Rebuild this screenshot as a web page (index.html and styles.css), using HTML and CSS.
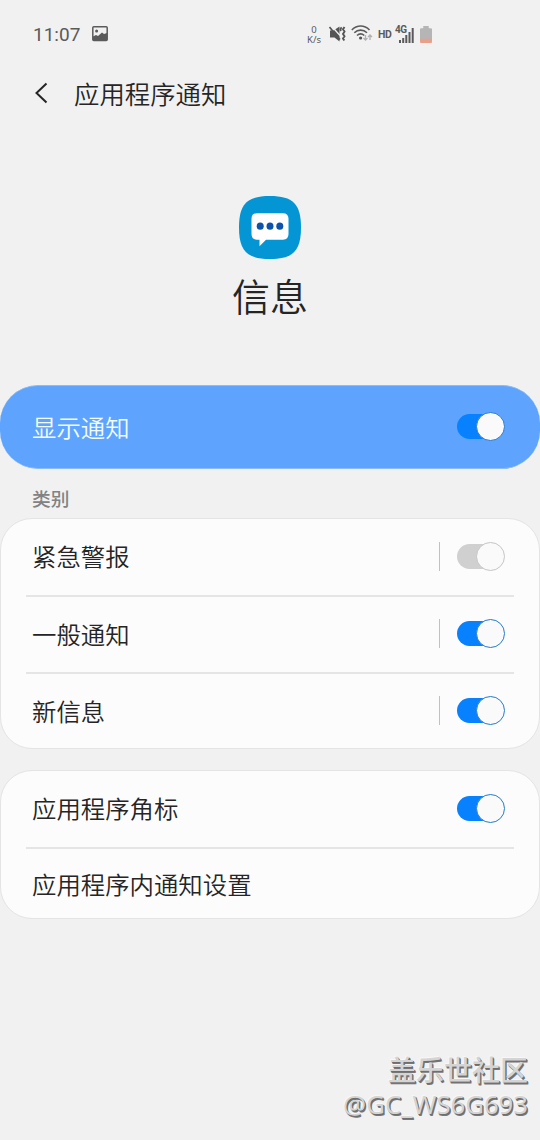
FILE: index.html
```html
<!DOCTYPE html>
<html lang="zh-CN">
<head>
<meta charset="utf-8">
<title>应用程序通知</title>
<link rel="stylesheet" href="styles.css">
</head>
<body>
<div class="screen">
  <div class="status">
    <span class="clock">11:07</span>
    <svg class="picture" width="16" height="16" viewBox="0 0 16 16"><rect x=".8" y=".8" width="14.4" height="13.6" rx="1" fill="none" stroke="#5a5a5a" stroke-width="1.5"/><circle cx="4.6" cy="5" r="1.5" fill="#5a5a5a"/><path d="M1 10.500l3-1.500 2 1 4-3.500 2 1.500 3-1v7H1z" fill="#5a5a5a"/></svg>
    <div class="speed"><span>0</span><span>K/s</span></div>
    <svg class="mute" width="17" height="18" viewBox="0 0 17 18"><path d="M1 5.500h3.500l6-4v15l-5-4H1z" fill="#555"/><path d="M2 .5l9 10" stroke="#f1f1f1" stroke-width="1.300"/><path d="M.5 2l10.500 12.500" stroke="#555" stroke-width="1.600"/><path d="M12.800 2.500q-2.500 1.500-.5 3.300M15.500 2l-1.500 2.300 1.500 2.300-1.500 2.300 1.500 2.300-1.500 2.300 1.300 2" fill="none" stroke="#555" stroke-width="1.900"/></svg>
    <svg class="wifi" width="22" height="17" viewBox="0 0 22 17"><g fill="none" stroke="#5a5a5a" stroke-width="1.6"><path d="M.8 5C6-.3 13.300-.3 18.500 5"/><path d="M3.300 7.800C7 4.200 12.300 4.200 16 7.800"/><path d="M6 10.500C8.200 8.500 11.100 8.500 13.300 10.500"/></g><circle cx="9.600" cy="13" r="1.600" fill="#555"/><path d="M14.500 10v5M12.500 13l2 2 2-2M19 15v-5M17 12l2-2 2 2" fill="none" stroke="#b0b0b0" stroke-width="1.300"/></svg>
    <span class="hd">HD</span>
    <div class="signal"><span class="net">4G</span><svg width="15" height="15" viewBox="0 0 15 15"><path d="M1 12v3M4.200 10v5M7.300 7v8M10.500 4v11M13.700 0v15" stroke="#5a5a5a" stroke-width="2"/></svg></div>
    <svg class="battery" width="12" height="17" viewBox="0 0 11 16" preserveAspectRatio="none"><path d="M3 0h5v2h2q1 0 1 1v10H0V3q0-1 1-1h2z" fill="#b5b5b5"/><path d="M0 12h11v3q0 1-1 1H1q-1 0-1-1z" fill="#e99f88"/></svg>
  </div>
  <header class="bar">
    <svg width="14" height="22" viewBox="0 0 14 22"><path d="M12.500 1.500L2.500 11l10 9.500" fill="none" stroke="#252525" stroke-width="2"/></svg>
    <h1>应用程序通知</h1>
  </header>
  <section class="app">
    <svg width="62" height="63" viewBox="0 0 62 62" preserveAspectRatio="none"><path d="M31 0C54 0 62 8 62 31S54 62 31 62 0 54 0 31 8 0 31 0z" fill="#0495d5"/><path d="M18 17h26q5.500 0 5.500 5.500v15q0 5.500-5.500 5.500H27l-6.500 6.500V43H18q-5.500 0-5.500-5.500V22.500Q12.500 17 18 17z" fill="#fff"/><g fill="#0d53ab"><circle cx="21.200" cy="29.700" r="3.500"/><circle cx="31" cy="29.700" r="3.500"/><circle cx="40.800" cy="29.700" r="3.500"/></g></svg>
    <h2>信息</h2>
  </section>
  <div class="master"><span>显示通知</span><i class="switch on"></i></div>
  <div class="label">类别</div>
  <div class="card categories">
    <div class="row"><span>紧急警报</span><i class="rule"></i><i class="switch"></i></div>
    <div class="row"><span>一般通知</span><i class="rule"></i><i class="switch on"></i></div>
    <div class="row"><span>新信息</span><i class="rule"></i><i class="switch on"></i></div>
  </div>
  <div class="card more">
    <div class="row"><span>应用程序角标</span><i class="switch on"></i></div>
    <div class="row last"><span>应用程序内通知设置</span></div>
  </div>
  <footer class="mark"><div class="community">盖乐世社区</div><div class="user">@GC_WS6G693</div></footer>
</div>
</body>
</html>
```
FILE: styles.css
```css
*, *::before, *::after { box-sizing: border-box; }
body { margin: 0; background: #f1f1f1; color: #252525; font-family: "Noto Sans CJK SC", sans-serif; font-weight: 350; }
h1, h2 { margin: 0; font-weight: 350; }
svg { display: block; flex: none; }
.screen { width: 540px; height: 1140px; display: flex; flex-direction: column; overflow: hidden; }
.status { height: 68px; flex: none; display: flex; align-items: center; padding-left: 33px; color: #5a5a5a; font-family: Roboto, sans-serif; font-weight: 400; }
.clock { width: 59px; font-size: 19px; line-height: 22px; padding-top: 2px; }
.speed { width: 20px; margin-left: 196px; display: flex; flex-direction: column; align-items: center; font-family: "Noto Sans", sans-serif; font-size: 9.500px; line-height: 10px; padding-top: 1px; }
.speed span { height: 10px; }
.mute { margin-left: 5px; }
.wifi { margin-left: 5px; margin-top: -1px; }
.hd { width: 15px; margin-left: 5px; font-size: 10.500px; font-weight: 700; letter-spacing: -.5px; }
.signal { width: 19px; height: 18px; margin-left: 2px; margin-top: -1px; display: grid; justify-items: end; align-items: end; }
.signal > * { grid-area: 1 / 1; }
.net { justify-self: start; align-self: start; z-index: 1; font-size: 10px; line-height: 9px; font-weight: 700; letter-spacing: -.5px; background: #f1f1f1; }
.battery { margin-left: 6px; }
.bar { height: 50px; flex: none; display: flex; align-items: center; padding-left: 34px; }
.bar h1 { margin-left: 26px; padding-bottom: 1px; font-size: 25.400px; line-height: 36px; }
.app { height: 267px; flex: none; padding-top: 78px; display: flex; flex-direction: column; align-items: center; }
.app h2 { margin-top: 8px; font-size: 38px; line-height: 56px; }
.master { height: 84px; flex: none; display: flex; align-items: center; justify-content: space-between; padding: 0 35px 1px 32px; border: solid #8dbbf4; border-width: 1px 0; border-radius: 38px; background: #5ea3fd; color: #f1fbff; font-size: 24.400px; }
.master span { padding-bottom: 1px; }
.label { height: 49px; flex: none; padding: 15px 32px 0; color: #828282; font-size: 18.700px; font-weight: 500; line-height: 27px; }
.card { flex: none; border: 1px solid #e4e4e4; border-radius: 32px; background: #fcfcfc; padding: 0 25px; font-size: 24.400px; }
.categories { height: 231px; }
.more { height: 149px; margin-top: 21px; }
.row { height: 76px; display: flex; align-items: center; padding: 0 9px 2px 6px; }
.row + .row { height: 77px; border-top: 2px solid #e5e5e5; }
.row span { flex: 1; line-height: 36px; }
.row + .row.last { height: 73px; }
.rule { width: 1px; height: 29px; margin-right: 17px; background: #c1c1c1; }
.switch { flex: none; width: 48px; height: 29px; display: flex; align-items: center; }
.switch::before { content: ""; flex: none; width: 38px; height: 25px; margin-right: -19px; border-radius: 13px; background: #d0d0d0; }
.switch::after { content: ""; flex: none; width: 29px; height: 29px; border: 1.500px solid #c5c5c5; border-radius: 50%; background: #fafafa; z-index: 1; }
.switch.on::before { background: #0881ff; }
.switch.on::after { border-color: #247bd0; }
.mark { margin-top: auto; padding: 0 12px 17px 0; text-align: right; color: #d4d4d4; text-shadow: 1px 1px 0 #6e6e6e, 1.500px 1.500px 0 #777, -1px -1px 0 #faf7f3; }
.community { font-size: 28px; line-height: 36px; font-weight: 500; }
.user { font-family: "Noto Sans", sans-serif; font-size: 25.700px; line-height: 36px; font-weight: 400; }
```
